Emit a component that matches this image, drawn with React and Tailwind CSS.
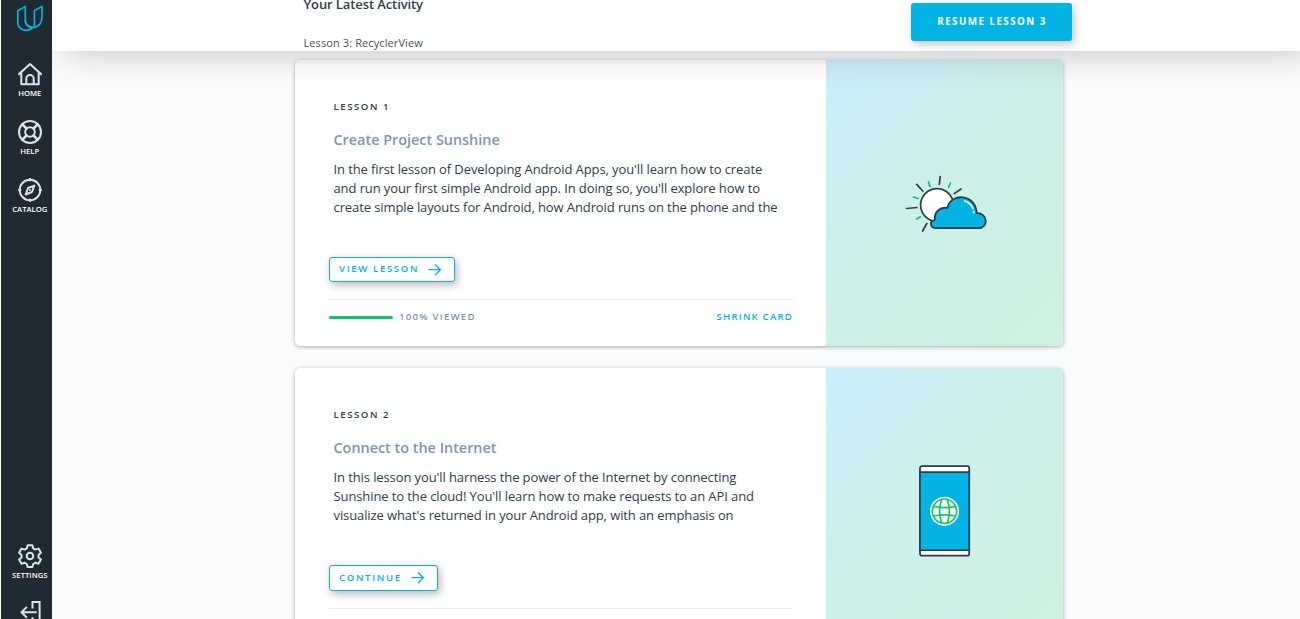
import React from "react";

function Logo() {
  return (
    <svg className="block h-7 w-7 shrink-0" viewBox="0 0 28 28" fill="none" stroke="#02b3e4" strokeWidth="1.7" strokeLinejoin="round" strokeLinecap="round">
      <path d="M9.3 1.6V15.5C9.3 19.4 12.5 22 16.2 22.4C14.4 24.6 12.5 25.3 10.2 25.3C5 25.3 1.8 22 1.8 17.5V5.8L9.3 1.6Z" />
      <path d="M26 1.6V12.5C26 17.5 22.8 22.2 17.6 22.5C12.5 22.5 9.3 19.5 9.3 15.5M26 1.6L18.4 5.6V22.2" />
    </svg>
  );
}

function NavIcon({ children }) {
  return (
    <svg className="block h-6 w-6 shrink-0" viewBox="0 0 24 24" fill="none" stroke="#dbe2e8" strokeWidth="2" strokeLinecap="round" strokeLinejoin="round">
      {children}
    </svg>
  );
}

function NavItem({ label, icon, className }) {
  return (
    <div className={`flex w-9 flex-col items-center ${className}`}>
      <NavIcon>{icon}</NavIcon>
      <span className="mt-[2px] whitespace-nowrap text-[7.7px] leading-[10px] font-semibold text-white">{label}</span>
    </div>
  );
}

const icons = {
  home: (
    <>
      <path d="M1 12L12 2L23 12M3.3 10.5V22.2H20.7V10.5" strokeLinecap="square" />
      <path d="M8.3 22V16.8a3.7 3.7 0 0 1 7.4 0V22" />
    </>
  ),
  help: (
    <>
      <circle cx="12" cy="12" r="11" />
      <circle cx="12" cy="12" r="4.8" />
      <path d="M4.3 4.3L8.5 8.5M19.7 4.3L15.5 8.5M4.3 19.7L8.5 15.5M19.7 19.7L15.5 15.5" strokeWidth="2.6" />
    </>
  ),
  catalog: (
    <>
      <circle cx="12" cy="12" r="10.3" />
      <path d="M12 .9V2.5M12 21.5V23.1M.9 12H2.5M21.5 12H23.1" />
      <path d="M16.3 7.6L14 14L7.7 16.5L10 10Z" />
      <circle cx="12" cy="12" r="1" fill="#dbe2e8" stroke="none" />
    </>
  ),
  settings: (
    <>
      <path d="M9.6 1.2h4.8l.8 3.2 2.1 1.2 3.2-1 2.4 4.2-2.4 2.2v2.4l2.4 2.2-2.4 4.2-3.2-1-2.1 1.2-.8 3H9.6l-.8-3-2.1-1.2-3.2 1-2.4-4.2 2.4-2.2v-2.4L1.1 8.8l2.4-4.2 3.2 1 2.1-1.2Z" />
      <circle cx="12" cy="12" r="3.3" />
    </>
  ),
  logout: (
    <path d="M14.5 6.4V1.1H21.6V23H14.5V17.2M3.8 11.3H17.7M8.2 6.6L3.5 11.3L8.2 16" strokeLinecap="square" strokeLinejoin="miter" />
  ),
};

function Arrow() {
  return (
    <svg className="block h-3 w-3.5 shrink-0" viewBox="0 0 14 12" fill="none" stroke="#02b3e4" strokeWidth="1.3" strokeLinecap="round" strokeLinejoin="round">
      <path d="M1 5.7H12.4M7.4 .7L12.4 5.7L7.4 10.7" />
    </svg>
  );
}

function SunCloud() {
  return (
    <svg className="ml-[2px] block h-[60px] w-[84px]" viewBox="0 0 84 60" fill="none" strokeLinecap="round" strokeLinejoin="round">
      <g stroke="#2e3d49" strokeWidth="1.7">
        <path d="M36.2 3.5L35.3 11.5M12.7 11.4L18.7 18M2.7 35.5L13 34.5M18.6 58L22.8 50.5M57 16L50.2 20.6" />
        <circle cx="33" cy="32" r="16.4" fill="#fff" />
      </g>
      <path d="M24.5 9L26 13.5M46.5 10L44.5 14.5M9.5 24L14 25.5M12.7 46L16.5 43.7" stroke="#15c26b" strokeWidth="1.8" />
      <path d="M33 55.2C25.6 55.2 25 48.3 30.8 46.8C30 39.2 36 33.5 43.4 35C46.4 19.8 71.6 20 72.8 40.2C84 39.7 85 55.2 74 55.2Z" fill="#02b3e4" stroke="#2e3d49" strokeWidth="1.8" />
      <path d="M60.7 28C65 29.2 67.3 31.8 68.7 35.3M69.7 38.5V39.5" stroke="#fff" strokeWidth="1.8" />
    </svg>
  );
}

function Phone() {
  return (
    <svg className="ml-px block h-[92px] w-[52px]" viewBox="0 0 52 92" fill="none">
      <rect x="1" y="1.1" width="49.2" height="89.6" rx="2" fill="#fff" stroke="#2e3d49" strokeWidth="1.8" />
      <path d="M1 7.1H50.2V85.2H1Z" fill="#02b3e4" stroke="#2e3d49" strokeWidth="1.6" />
      <circle cx="25.5" cy="46.2" r="14.5" fill="#fff" />
      <g stroke="#15c26b" strokeWidth="1.7">
        <circle cx="25.5" cy="46.2" r="12.2" />
        <path d="M22.6 34.4Q18.6 46.2 22.6 58M28.4 34.4Q32.4 46.2 28.4 58" />
        <path d="M15 41.4Q25.5 44 36 41.4M15 51Q25.5 48.6 36 51" />
      </g>
    </svg>
  );
}

function LessonCard({ number, title, lines, action, buttonClass, art }) {
  return (
    <article className="flex h-[286px] w-[768px] shrink-0 overflow-hidden rounded-[5px] bg-white shadow-[0_1px_4px_rgba(0,0,0,0.32)]">
      <div className="flex w-[531px] flex-col pl-[34px] pt-[39px]">
        <div className="pl-[4.5px]">
          <div className="text-[9.6px] leading-4 font-semibold tracking-[1.55px] text-[#2e3d49]">LESSON {number}</div>
          <h2 className="mt-[15px] text-[14.4px] leading-5 font-semibold text-[#7d97ad]">{title}</h2>
          <p className="mt-[10px] h-[57px] text-[13px] leading-[19px] font-normal tracking-[-0.1px] text-[#2e3d49]">
            {lines.map((line) => (
              <span key={line} className="block whitespace-nowrap">{line}</span>
            ))}
          </p>
        </div>
        <button className={`mt-10 flex shrink-0 items-center justify-between rounded-[3px] border border-[#02b3e4] bg-white pl-[9px] pr-[12px] text-[9.6px] font-semibold tracking-[1.65px] text-[#02b3e4] shadow-[2px_3px_8px_rgba(0,0,0,0.28)] ${buttonClass}`}>
          <span>{action}</span>
          <Arrow />
        </button>
        <div className="mt-[17px] flex w-[464px] items-center border-t border-[#e9ecef] pt-[9px]">
          <div className="h-[3px] w-16 rounded-full bg-[#15c26b]" />
          <span className="ml-1.5 text-[9.6px] leading-4 font-semibold tracking-[1.25px] text-[#7d97ad]">100% VIEWED</span>
          <span className="ml-auto text-[9.6px] leading-4 font-semibold tracking-[1.2px] text-[#02b3e4]">SHRINK CARD</span>
        </div>
      </div>
      <div className="flex w-[237px] items-center justify-center bg-[linear-gradient(135deg,#caeefb_0%,#cdf0ea_45%,#cdf1e6_70%,#d1f3e0_100%)]">
        {art}
      </div>
    </article>
  );
}

export default function App() {
  return (
    <div className="flex h-[619px] w-[1300px] overflow-hidden bg-white pl-px font-['Open_Sans',sans-serif]">
      <aside className="flex w-[51px] shrink-0 flex-col items-center overflow-hidden bg-[#1f2a32] pl-[6.6px] pt-[5px]">
        <Logo />
        <NavItem label="HOME" icon={icons.home} className="mt-[29px]" />
        <NavItem label="HELP" icon={icons.help} className="mt-[22px]" />
        <NavItem label="CATALOG" icon={icons.catalog} className="mt-[22px]" />
        <div className="mt-auto flex h-[75px] shrink-0 flex-col items-center">
          <NavItem label="SETTINGS" icon={icons.settings} className="" />
          <div className="mt-[21px]">
            <NavIcon>{icons.logout}</NavIcon>
          </div>
        </div>
      </aside>
      <div className="flex min-w-0 flex-1 flex-col overflow-hidden bg-[#fafbfd]">
        <header className="z-10 flex h-[51px] shrink-0 bg-white pl-[251.5px] pr-[228px] shadow-[12px_0_36px_rgba(0,0,0,0.24)]">
          <div className="flex flex-col">
            <div className="-mt-[6px] text-[13px] leading-5 font-semibold tracking-[-0.1px] text-[#2e3d49]">Your Latest Activity</div>
            <div className="mt-[21px] text-[11px] leading-4 tracking-[0.1px] text-[#4f4f4f]">Lesson 3: RecyclerView</div>
          </div>
          <button className="ml-auto mt-[3px] h-[38px] w-[161px] rounded-[3px] bg-[#02b3e4] pl-px text-[9.8px] font-bold tracking-[1.45px] text-white shadow-[2px_3px_9px_rgba(0,0,0,0.25)]">RESUME LESSON 3</button>
        </header>
        <main className="flex min-h-0 flex-1 flex-col gap-[22px] overflow-hidden pl-[243px] pt-[9px]">
          <LessonCard
            number="1"
            title="Create Project Sunshine"
            lines={[
              "In the first lesson of Developing Android Apps, you'll learn how to create",
              "and run your first simple Android app. In doing so, you'll explore how to",
              "create simple layouts for Android, how Android runs on the phone and the",
            ]}
            action="VIEW LESSON"
            buttonClass="h-[25px] w-[126px]"
            art={<SunCloud />}
          />
          <LessonCard
            number="2"
            title="Connect to the Internet"
            lines={[
              "In this lesson you'll harness the power of the Internet by connecting",
              "Sunshine to the cloud! You'll learn how to make requests to an API and",
              "visualize what's returned in your Android app, with an emphasis on",
            ]}
            action="CONTINUE"
            buttonClass="h-[26px] w-[109px]"
            art={<Phone />}
          />
        </main>
      </div>
    </div>
  );
}
